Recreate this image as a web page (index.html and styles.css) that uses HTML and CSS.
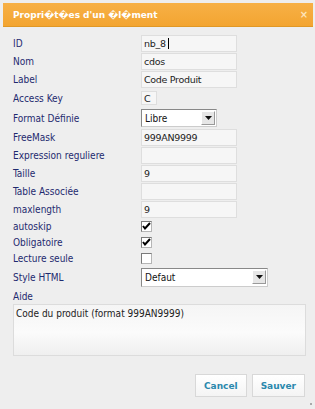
FILE: index.html
```
<!DOCTYPE html>
<html lang="fr">
<head>
  <meta charset="UTF-8">
  <title>Propriétés d'un élément</title>
  <link rel="stylesheet" href="styles.css">
</head>
<body>
  <div class="dialog">
    <!-- barre de titre -->
    <div class="titlebar">
      <span class="title">Propri�t�es d'un �l�ment</span>
      <span class="close">×</span>
    </div>

    <div class="form">
      <div class="row"><label>ID</label><div class="field"><input type="text" class="txt" value="nb_8"><span class="caret"></span></div></div>
      <div class="row"><label>Nom</label><div class="field"><input type="text" class="txt" value="cdos"></div></div>
      <div class="row"><label>Label</label><div class="field"><input type="text" class="txt" value="Code Produit"></div></div>
      <div class="row tall"><label>Access Key</label><div class="field"><input type="text" class="txt key" value="C"></div></div>
      <div class="row tall">
        <label>Format Définie</label>
        <div class="field">
          <div class="select small"><span class="value">Libre</span><span class="btn"><svg width="7" height="4" viewBox="0 0 7 4"><path d="M0 0h7L3.5 4z" fill="#111"/></svg></span></div>
        </div>
      </div>
      <div class="row"><label>FreeMask</label><div class="field"><input type="text" class="txt" value="999AN9999"></div></div>
      <div class="row"><label>Expression reguliere</label><div class="field"><input type="text" class="txt" value=""></div></div>
      <div class="row"><label>Taille</label><div class="field"><input type="text" class="txt" value="9"></div></div>
      <div class="row"><label>Table Associée</label><div class="field"><input type="text" class="txt" value=""></div></div>
      <div class="row"><label>maxlength</label><div class="field"><input type="text" class="txt" value="9"></div></div>
      <div class="row cb"><label>autoskip</label><div class="field"><span class="check on"><svg width="9" height="8" viewBox="0 0 9 8"><path d="M1 4l2 2.5L8 1" fill="none" stroke="#000" stroke-width="2"/></svg></span></div></div>
      <div class="row cb"><label>Obligatoire</label><div class="field"><span class="check on"><svg width="9" height="8" viewBox="0 0 9 8"><path d="M1 4l2 2.5L8 1" fill="none" stroke="#000" stroke-width="2"/></svg></span></div></div>
      <div class="row cb"><label>Lecture seule</label><div class="field"><span class="check"></span></div></div>
      <div class="row style">
        <label>Style HTML</label>
        <div class="field">
          <div class="select wide"><span class="value">Defaut</span><span class="btn"><svg width="7" height="4" viewBox="0 0 7 4"><path d="M0 0h7L3.5 4z" fill="#111"/></svg></span></div>
        </div>
      </div>
      <div class="row aide"><label>Aide</label></div>
      <textarea class="help">Code du produit (format 999AN9999)</textarea>
    </div>

    <div class="buttons">
      <button class="bt">Cancel</button>
      <button class="bt">Sauver</button>
    </div>
    <span class="grip"></span>
  </div>
</body>
</html>
```
FILE: styles.css
```
body {
  margin: 0;
  background: #eeeeee;
  font-family: "DejaVu Sans Condensed", "DejaVu Sans", sans-serif;
  font-size: 10px;
}
.dialog {
  width: 315px;
  height: 409px;
  position: relative;
  padding-top: 3px;
  box-sizing: border-box;
}
/* barre de titre orange */
.titlebar {
  margin: 0 2px 0 3px;
  height: 24px;
  background: linear-gradient(#f7b046, #f3a531);
  border-bottom: 1px solid #e09826;
  display: flex;
  align-items: center;
  justify-content: space-between;
  padding: 0 5px 0 10px;
  color: #fff;
  box-sizing: border-box;
}
.title {
  font-family: "DejaVu Sans", sans-serif;
  font-weight: bold;
  font-size: 9px;
}
.close {
  font-weight: bold;
  font-size: 11px;
  color: #fde4bb;
}
.form {
  padding: 7px 0 0 13px;
}
.row {
  display: flex;
  align-items: center;
  height: 18px;
}
.row.tall { height: 20px; }
.row.cb { height: 16px; }
.row.style { height: 22px; }
.row.aide { height: 16px; }
.row label {
  width: 128px;
  color: #1e2a6e;
}
.field {
  display: flex;
  align-items: center;
  position: relative;
}
.txt {
  width: 96px;
  height: 17px;
  box-sizing: border-box;
  border: 1px solid #dedede;
  background: #f6f6f6;
  padding: 0 2px;
  margin: 0;
  font-family: "DejaVu Sans", sans-serif;
  font-size: 9.5px;
  letter-spacing: -0.3px;
  color: #222;
  outline: none;
}
.txt.key {
  width: 16px;
  height: 14px;
}
/* curseur de saisie dans le champ ID */
.caret {
  position: absolute;
  left: 27px;
  top: 3px;
  width: 1px;
  height: 11px;
  background: #000;
}
/* liste déroulante dessinée */
.select {
  display: flex;
  align-items: center;
  justify-content: space-between;
  height: 18px;
  box-sizing: border-box;
  border: 1px solid #888;
  border-right-color: #ccc;
  border-bottom-color: #ccc;
  background: #fff;
  padding: 0 1px 0 3px;
  color: #111;
}
.select.small { width: 76px; }
.select.wide { width: 127px; height: 19px; }
.select .btn {
  width: 14px;
  height: 14px;
  box-sizing: border-box;
  background: #e6e6e6;
  border: 1px solid;
  border-color: #fff #999 #999 #fff;
  display: flex;
  align-items: center;
  justify-content: center;
}
.check {
  width: 11px;
  height: 11px;
  box-sizing: border-box;
  border: 1px solid;
  border-color: #7a7a7a #b5b5b5 #b5b5b5 #7a7a7a;
  background: #fff;
  display: flex;
  align-items: center;
  justify-content: center;
}
.help {
  display: block;
  width: 293px;
  height: 52px;
  box-sizing: border-box;
  margin: 0;
  border: 1px solid #dcdcdc;
  background: linear-gradient(#f5f5f5, #fbfbfb 55%, #efefef);
  padding: 3px 2px;
  resize: none;
  font-family: "DejaVu Sans Condensed", "DejaVu Sans", sans-serif;
  font-size: 10px;
  color: #222;
}
.buttons {
  display: flex;
  justify-content: flex-end;
  gap: 5px;
  margin: 18px 10px 0 0;
}
.bt {
  height: 23px;
  padding: 0 8px;
  border: 1px solid #d8d8d8;
  background: linear-gradient(#ffffff, #f4f4f4);
  color: #2a88ad;
  font-family: "DejaVu Sans", sans-serif;
  font-weight: bold;
  font-size: 9px;
}
.grip {
  position: absolute;
  right: 3px;
  bottom: 4px;
  width: 2px;
  height: 2px;
  background: #aaa;
}
```
